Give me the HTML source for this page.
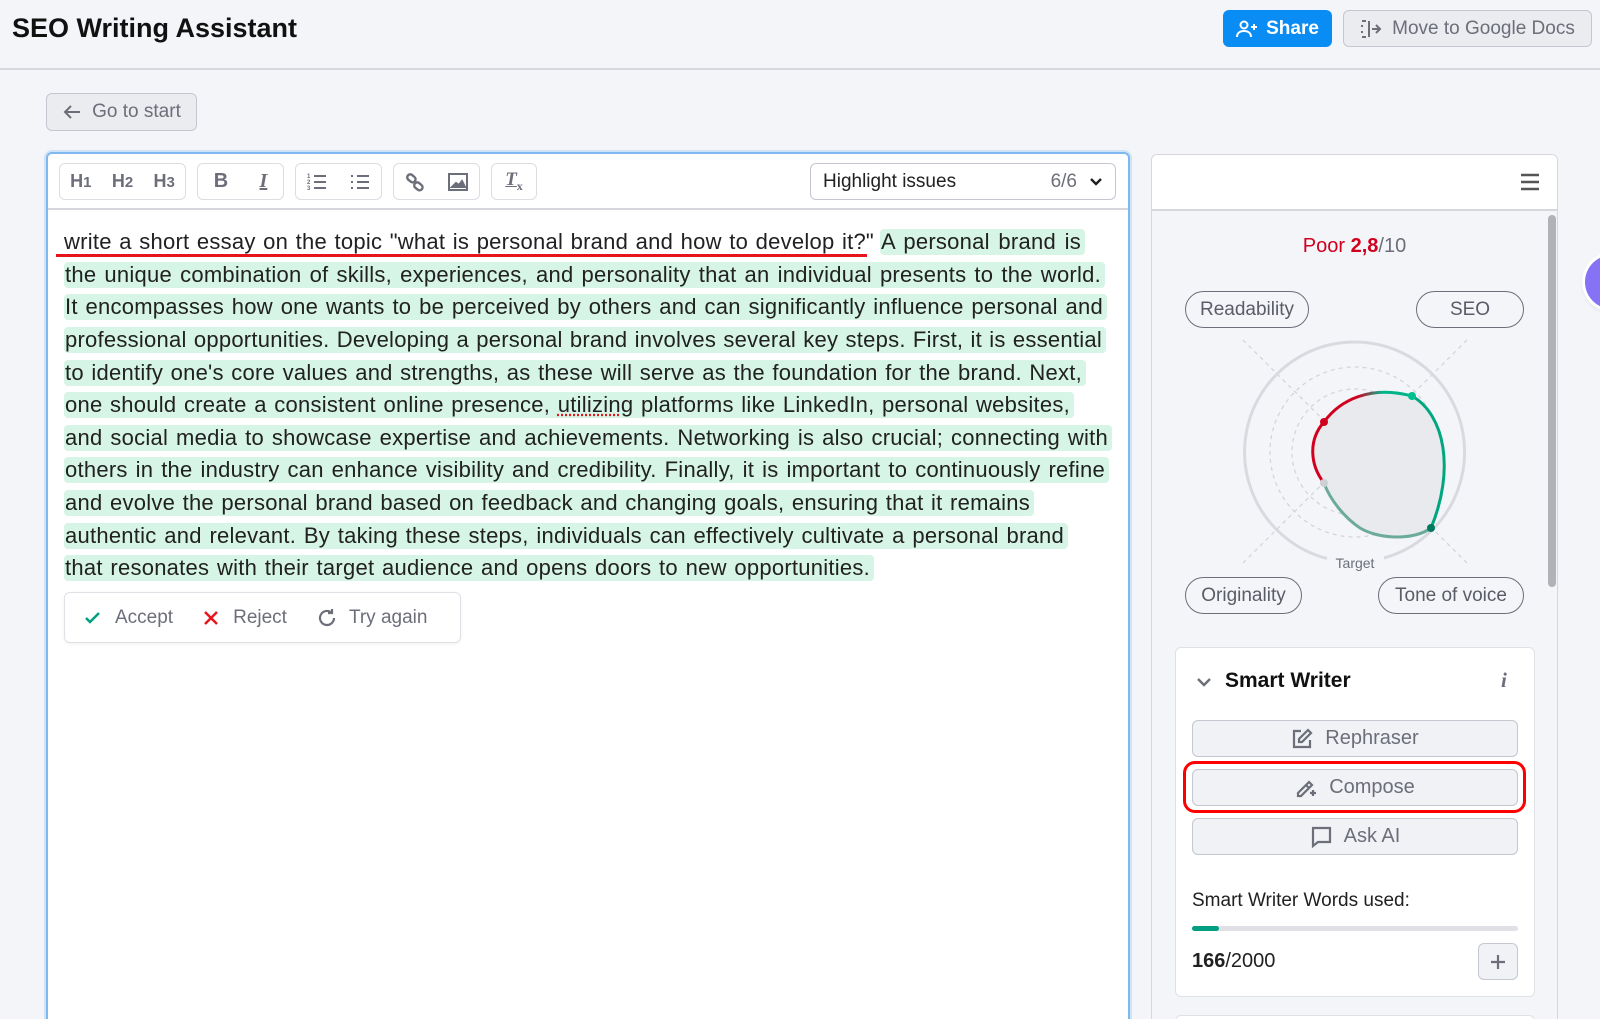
<!DOCTYPE html>
<html style="width:1600px;height:1019px;overflow:hidden"><head><meta charset="utf-8"><style>
*{box-sizing:border-box;margin:0;padding:0}
body{width:1600px;height:1019px;overflow:hidden;background:#f4f5f9;font-family:"Liberation Sans",sans-serif;color:#212121}
#wrap{position:relative;width:1600px;height:1019px;overflow:hidden}
.abs{position:absolute}
.btn{position:absolute;border:1px solid #c4c7cf;border-radius:6px;background:#ebecf0;color:#6c6e79;font-size:19px;display:flex;align-items:center;justify-content:center;gap:10px}
.tg{position:absolute;top:163px;height:37px;border:1px solid #dcdde3;border-radius:6px;background:#fff;display:flex;align-items:center;justify-content:space-around;color:#6c6e79;font-size:18px;font-weight:bold}
.ln{position:absolute;left:64px;height:33px;font-size:22px;letter-spacing:0.25px;white-space:nowrap}
.ln span{display:inline-block;line-height:26px;margin-top:3px;text-align:justify;text-align-last:justify;white-space:nowrap;overflow:hidden}
.hl{background:#d6f5e6;border-radius:4px;padding:0 4px 0 1px}
.pill{position:absolute;height:37px;border:1.5px solid #6c6e79;border-radius:19px;font-size:19px;color:#5a5c66;display:flex;align-items:center;justify-content:center}
.sw{position:absolute;left:1192px;width:326px;height:37px;border:1px solid #c4c7cf;border-radius:6px;background:#f1f2f5;display:flex;align-items:center;justify-content:center;gap:12px;color:#6c6e79;font-size:20px}
</style></head><body><div id="wrap">
<div class="abs" style="left:0;top:0;width:1600px;height:70px;border-bottom:2px solid #d6d7dc"></div>
<div class="abs" style="left:12px;top:13px;font-size:27px;font-weight:bold;color:#111">SEO Writing Assistant</div>
<div class="abs" style="left:1223px;top:10px;width:109px;height:37px;background:#0a8cf5;border-radius:6px;color:#fff;font-size:19px;font-weight:bold;display:flex;align-items:center;justify-content:center;gap:8px">
<svg width="22" height="18" viewBox="0 0 22 18" fill="none" stroke="#fff" stroke-width="2"><circle cx="8" cy="5" r="3.5"/><path d="M1 17c0-4 3-6 7-6s7 2 7 6"/><path d="M18 4v6M15 7h6"/></svg>Share</div>
<div class="btn" style="left:1343px;top:10px;width:249px;height:37px;color:#6c6e79">
<svg width="22" height="20" viewBox="0 0 22 20" fill="none" stroke="#6c6e79" stroke-width="2"><path d="M2 2h4M2 18h4M2 6v2M2 12v2M9 2v16"/><path d="M12 10h8M16 6l4 4-4 4"/></svg>Move to Google Docs</div>
<div class="btn" style="left:46px;top:93px;width:151px;height:38px">
<svg width="20" height="16" viewBox="0 0 20 16" fill="none" stroke="#6c6e79" stroke-width="2"><path d="M18 8H3M9 2L3 8l6 6"/></svg>Go to start</div>

<div class="abs" style="left:46px;top:152px;width:1084px;height:900px;background:#fff;border:2px solid #7fb8ee;border-radius:6px;box-shadow:0 0 0 2px #cfe3f8"></div>
<div class="abs" style="left:48px;top:208px;width:1080px;height:2px;background:#d6d7dc"></div>
<div class="tg" style="left:59px;width:127px"><span>H<small>1</small></span><span>H<small>2</small></span><span>H<small>3</small></span></div>
<div class="tg" style="left:197px;width:87px;font-size:20px"><span>B</span><span style="font-style:italic;font-family:'Liberation Serif',serif;text-decoration:underline">I</span></div>
<div class="tg" style="left:295px;width:87px"><svg width="20" height="18" viewBox="0 0 20 18" stroke="#6c6e79" stroke-width="2"><path d="M7 3h12M7 9h12M7 15h12"/><text x="0" y="5" font-size="6" fill="#6c6e79" stroke="none">1</text><text x="0" y="11" font-size="6" fill="#6c6e79" stroke="none">2</text><text x="0" y="17" font-size="6" fill="#6c6e79" stroke="none">3</text></svg><svg width="20" height="18" viewBox="0 0 20 18" stroke="#6c6e79" stroke-width="2"><path d="M7 3h12M7 9h12M7 15h12M1 3h2M1 9h2M1 15h2"/></svg></div>
<div class="tg" style="left:393px;width:87px"><svg width="20" height="20" viewBox="0 0 20 20" fill="none" stroke="#6c6e79" stroke-width="2.4"><rect x="2" y="3" width="9" height="6" rx="3" transform="rotate(40 6 6)"/><rect x="9" y="11" width="9" height="6" rx="3" transform="rotate(40 13 14)"/></svg><svg width="20" height="18" viewBox="0 0 20 18" fill="none" stroke="#6c6e79" stroke-width="2"><rect x="1" y="1" width="18" height="16"/><path d="M4 14l4-4 3 2 3-4 3 6z" fill="#6c6e79"/></svg></div>
<div class="tg" style="left:491px;width:46px;font-style:italic;font-family:'Liberation Serif',serif;font-size:19px"><span style="text-decoration:underline">T<sub style="font-size:12px;font-style:normal">x</sub></span></div>
<div class="abs" style="left:810px;top:163px;width:306px;height:37px;border:1px solid #c4c7cf;border-radius:6px;background:#fff;font-size:19px;display:flex;align-items:center;padding:0 12px;color:#212121"><span style="flex:1">Highlight issues</span><span style="color:#6c6e79;margin-right:12px">6/6</span><svg width="14" height="9" viewBox="0 0 14 9" fill="none" stroke="#212121" stroke-width="2.4"><path d="M2 2l5 5 5-5"/></svg></div>

<div class="ln" style="top:226px"><span style="width:810px">write a short essay on the topic "what is personal brand and how to develop it?"</span> <span class="hl" style="width:205px;position:absolute;left:816px;top:0">A personal brand is</span></div>
<div class="abs" style="left:56px;top:254px;width:811px;height:2.5px;background:#e8141c"></div>
<div class="ln" style="top:259px"><span class="hl" style="width:1041px">the unique combination of skills, experiences, and personality that an individual presents to the world.</span></div>
<div class="ln" style="top:291px"><span class="hl" style="width:1043px">It encompasses how one wants to be perceived by others and can significantly influence personal and</span></div>
<div class="ln" style="top:324px"><span class="hl" style="width:1042px">professional opportunities. Developing a personal brand involves several key steps. First, it is essential</span></div>
<div class="ln" style="top:357px"><span class="hl" style="width:1022px">to identify one's core values and strengths, as these will serve as the foundation for the brand. Next,</span></div>
<div class="ln" style="top:389px"><span class="hl" style="width:1010px">one should create a consistent online presence, <u style="text-decoration:underline dotted #e8141c">utilizing</u> platforms like LinkedIn, personal websites,</span></div>
<div class="ln" style="top:422px"><span class="hl" style="width:1048px">and social media to showcase expertise and achievements. Networking is also crucial; connecting with</span></div>
<div class="ln" style="top:454px"><span class="hl" style="width:1045px">others in the industry can enhance visibility and credibility. Finally, it is important to continuously refine</span></div>
<div class="ln" style="top:487px"><span class="hl" style="width:970px">and evolve the personal brand based on feedback and changing goals, ensuring that it remains</span></div>
<div class="ln" style="top:520px"><span class="hl" style="width:1004px">authentic and relevant. By taking these steps, individuals can effectively cultivate a personal brand</span></div>
<div class="ln" style="top:552px"><span class="hl" style="width:810px">that resonates with their target audience and opens doors to new opportunities.</span></div>

<div class="abs" style="left:64px;top:592px;width:397px;height:51px;background:#fff;border:1px solid #e0e1e6;border-radius:6px;box-shadow:0 1px 3px rgba(0,0,0,.06);display:flex;align-items:center;font-size:19px;color:#6c6e79">
<svg style="margin-left:20px" width="16" height="12" viewBox="0 0 16 12" fill="none" stroke="#009f81" stroke-width="2.5"><path d="M1 6l4 4 9-9"/></svg><span style="margin-left:14px">Accept</span>
<svg style="margin-left:30px" width="16" height="16" viewBox="0 0 16 16" fill="none" stroke="#e8141c" stroke-width="2.5"><path d="M2 2l12 12M14 2L2 14"/></svg><span style="margin-left:14px">Reject</span>
<svg style="margin-left:30px" width="20" height="20" viewBox="0 0 20 20" fill="none" stroke="#6c6e79" stroke-width="2.2"><path d="M17 10a7 7 0 1 1-2.5-5.4"/><path d="M15 1v4h-4"/></svg><span style="margin-left:12px">Try again</span></div>

<div class="abs" style="left:1151px;top:154px;width:407px;height:900px;background:#f4f5f9;border:1px solid #d6d7dc;border-radius:6px;overflow:hidden"><div style="height:56px;background:#fff;border-bottom:2px solid #d6d7dc"></div></div>
<svg class="abs" style="left:1520px;top:173px" width="20" height="18" viewBox="0 0 20 18" stroke="#555" stroke-width="2.4"><path d="M1 2h18M1 9h18M1 16h18"/></svg>
<div class="abs" style="left:1548px;top:215px;width:8px;height:372px;background:#b0b2b8;border-radius:4px"></div>
<div class="abs" style="left:1585px;top:255px;width:54px;height:54px;border-radius:50%;background:#8572f5;box-shadow:0 0 0 3px #fff,0 2px 6px rgba(0,0,0,.2)"></div>
<div class="abs" style="left:1151px;top:235px;width:407px;text-align:center;font-size:20px;color:#d1001f">Poor <b>2,8</b><span style="color:#6c6e79">/10</span></div>
<div class="pill" style="left:1185px;top:291px;width:124px">Readability</div>
<div class="pill" style="left:1416px;top:291px;width:108px">SEO</div>
<div class="pill" style="left:1185px;top:577px;width:117px">Originality</div>
<div class="pill" style="left:1378px;top:577px;width:146px">Tone of voice</div>
<svg class="abs" style="left:1230px;top:325px" width="250" height="250" viewBox="1230 325 250 250">
<g fill="none" stroke="#d4d5da" stroke-width="1.3" stroke-dasharray="4 4">
<path d="M1243 340L1467 563M1467 340L1243 563"/>
<circle cx="1355" cy="452" r="85"/><circle cx="1355" cy="452" r="63"/><circle cx="1355" cy="452" r="43"/></g>
<path d="M1327 558.5A110 110 0 1 1 1384 558" fill="none" stroke="#d9dadf" stroke-width="3"/>
<path d="M1324 483C1310 465 1308 440 1324 422C1340 400 1370 385 1412 396C1445 415 1455 470 1431 528C1415 540 1380 540 1360 528C1345 518 1330 500 1324 483Z" fill="#e9eaee"/>
<defs><linearGradient id="gr" x1="0" y1="0" x2="1" y2="0"><stop offset="0" stop-color="#d1001f"/><stop offset=".45" stop-color="#d1001f"/><stop offset=".7" stop-color="#00b48a"/></linearGradient></defs>
<path d="M1324 483C1310 465 1308 440 1324 422C1340 400 1370 385 1412 396" fill="none" stroke="url(#gr)" stroke-width="3"/>
<path d="M1412 396C1445 415 1455 470 1431 528" fill="none" stroke="#00a77e" stroke-width="3"/>
<path d="M1431 528C1415 540 1380 540 1360 528C1345 518 1330 500 1324 483" fill="none" stroke="#4b9a82" stroke-width="3" opacity=".8"/>
<circle cx="1324" cy="422" r="4" fill="#d1001f"/><circle cx="1412" cy="396" r="4" fill="#00c08f"/><circle cx="1431" cy="528" r="4" fill="#007a5e"/><circle cx="1324" cy="483" r="4" fill="#cfd0d4"/>
<text x="1355" y="568" font-size="14" fill="#6c6e79" text-anchor="middle" font-family="Liberation Sans">Target</text>
</svg>

<div class="abs" style="left:1175px;top:647px;width:360px;height:350px;background:#fff;border:1px solid #e0e1e6;border-radius:6px"></div>
<svg class="abs" style="left:1196px;top:677px" width="16" height="10" viewBox="0 0 16 10" fill="none" stroke="#6c6e79" stroke-width="2.4"><path d="M2 2l6 6 6-6"/></svg>
<div class="abs" style="left:1225px;top:669px;font-size:21px;font-weight:bold;color:#111">Smart Writer</div>
<div class="abs" style="left:1501px;top:668px;font-size:21px;font-style:italic;font-family:'Liberation Serif',serif;font-weight:bold;color:#6c6e79">i</div>
<div class="sw" style="top:720px"><svg width="22" height="22" viewBox="0 0 22 22" fill="none" stroke="#6c6e79" stroke-width="2.2"><path d="M10 3H3v16h16v-7"/><path d="M17 2l3 3-9 9H8v-3z"/></svg>Rephraser</div>
<div class="abs" style="left:1183px;top:761px;width:343px;height:52px;border:3px solid #f00;border-radius:12px"></div>
<div class="sw" style="top:769px"><svg width="22" height="22" viewBox="0 0 22 22" fill="none" stroke="#6c6e79" stroke-width="2.2"><path d="M3 16L14 5l3 3L6 19H3z"/><path d="M11 8l3 3M18 13v6M15 16h6"/></svg>Compose</div>
<div class="sw" style="top:818px"><svg width="22" height="22" viewBox="0 0 22 22" fill="none" stroke="#6c6e79" stroke-width="2.2"><path d="M2 2h18v14H8l-5 4V2z"/></svg>Ask AI</div>
<div class="abs" style="left:1192px;top:890px;font-size:19px;color:#212121">Smart Writer Words used:</div>
<div class="abs" style="left:1192px;top:926px;width:326px;height:5px;background:#e0e1e6;border-radius:3px"><div style="width:27px;height:5px;background:#009f81;border-radius:3px"></div></div>
<div class="abs" style="left:1192px;top:950px;font-size:20px;color:#212121"><b>166</b>/2000</div>
<div class="abs" style="left:1478px;top:943px;width:40px;height:37px;border:1px solid #c4c7cf;border-radius:6px;background:#f1f2f5;display:flex;align-items:center;justify-content:center"><svg width="16" height="16" viewBox="0 0 16 16" stroke="#6c6e79" stroke-width="2.2"><path d="M8 1v14M1 8h14"/></svg></div>
<div class="abs" style="left:1175px;top:1015px;width:360px;height:20px;background:#fff;border:1px solid #e0e1e6;border-radius:6px"></div>
</div></body></html>
